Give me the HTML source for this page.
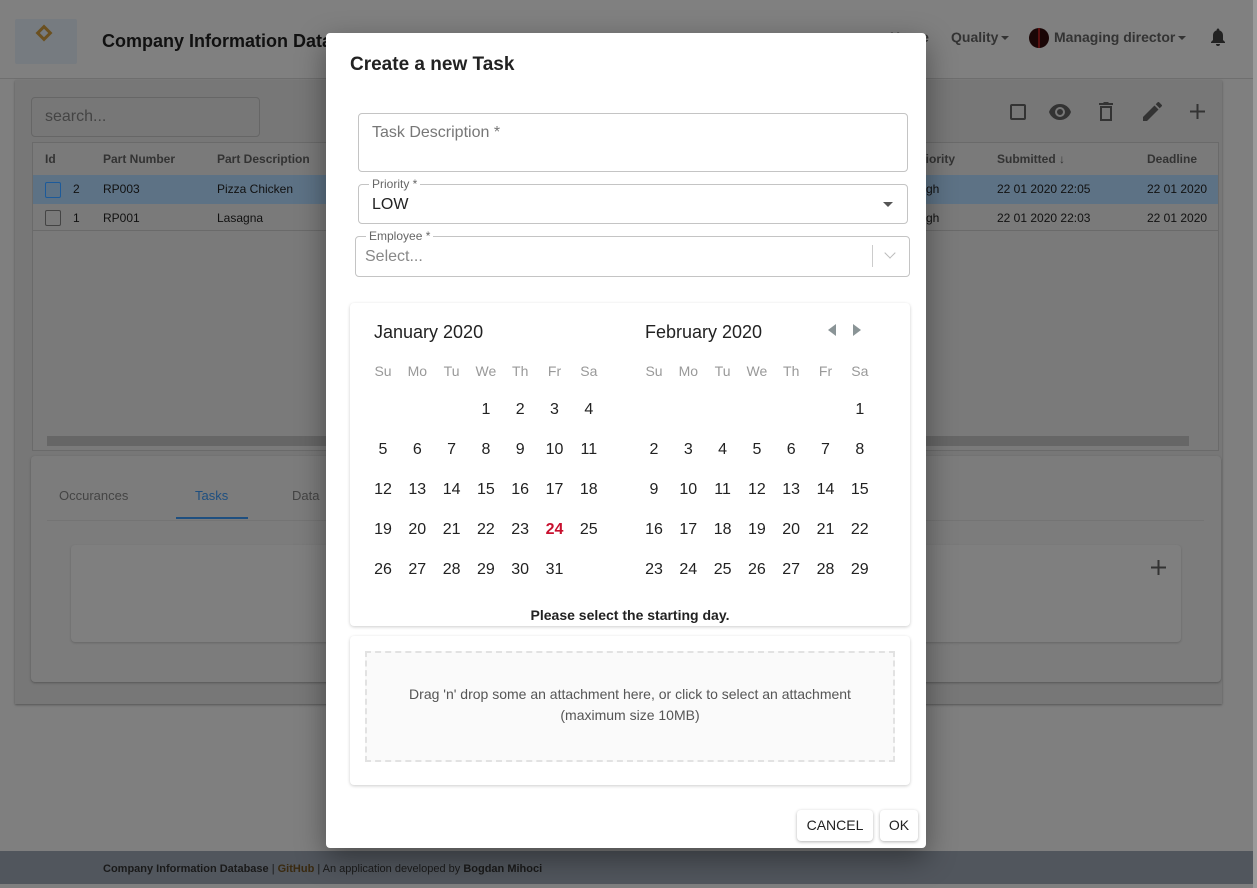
<!DOCTYPE html>
<html><head><meta charset="utf-8"><style>
*{box-sizing:border-box;margin:0;padding:0}
body{width:1257px;height:888px;position:relative;overflow:hidden;background:#7f7f7f;font-family:"Liberation Sans",Arial,sans-serif;color:#222}
.abs{position:absolute}
.hdr{left:0;top:0;width:1253px;height:79px;background:#808080;border-bottom:1px solid #6f6f6f}
.main{left:15px;top:80px;width:1207px;height:624px;background:#777;box-shadow:0 1px 2px #555}
.sb{right:0;top:0;width:4px;height:888px;background:#9a9a9a}
.foot{left:0;top:851px;width:1253px;height:33px;background:#51565d;font-size:11px;color:#1a1a1a;padding:12px 0 0 103px}
.dlg{left:326px;top:33px;width:600px;height:815px;background:#fff;border-radius:4px;box-shadow:0 10px 30px rgba(0,0,0,.4)}
.fld{position:absolute;border:1px solid #c4c4c4;border-radius:4px}
.lbl{position:absolute;background:#fff;font-size:12px;color:#666;padding:0 3px}
.cal{left:24px;top:270px;width:560px;height:323px;border-radius:4px;box-shadow:0 1px 3px rgba(0,0,0,.2)}
.d{position:absolute;width:30px;margin-left:-15px;text-align:center;font-size:16px;color:#222}
.w{position:absolute;width:30px;margin-left:-15px;text-align:center;font-size:14px;color:#999}
.btn{position:absolute;top:777px;height:31px;background:#fff;border-radius:4px;box-shadow:0 1px 3px rgba(0,0,0,.3);font-size:14px;color:#222;text-align:center;line-height:31px}
.car{display:inline-block;border:4px solid transparent;border-top:4px solid #333;border-bottom:0;vertical-align:middle;margin-left:3px}
</style></head><body>
<div class="abs hdr"></div>
<div class="abs" style="left:15px;top:19px;width:62px;height:45px;background:#767b80;border-radius:2px"></div>
<div class="abs" style="left:38px;top:27px;width:12px;height:12px;border:3px solid #6b5020;transform:rotate(45deg)"></div>
<div class="abs" style="left:102px;top:31px;font-size:18px;font-weight:bold;color:#111">Company Information Database</div>
<div class="abs" style="left:890px;top:29px;font-size:14px;font-weight:bold;color:#333">Home</div>
<div class="abs" style="left:951px;top:29px;font-size:14px;font-weight:bold;color:#333">Quality<span class="car"></span></div>
<div class="abs" style="left:1029px;top:28px;width:20px;height:20px;border-radius:50%;background:#1a0606"></div>
<div class="abs" style="left:1038px;top:28px;width:2px;height:20px;background:#5a1010"></div>
<div class="abs" style="left:1054px;top:29px;font-size:14px;font-weight:bold;color:#333">Managing director<span class="car"></span></div>
<svg class="abs" style="left:1210px;top:28px" width="16" height="18" viewBox="0 0 16 18"><path d="M8 0.5c-0.8 0-1.3 0.6-1.3 1.3v0.6C4.3 3 3 5 3 7.5V12l-2 2v1h14v-1l-2-2V7.5C13 5 11.7 3 9.3 2.4v-0.6C9.3 1.1 8.8 0.5 8 0.5zM6 16a2 2 0 0 0 4 0z" fill="#222"/></svg>
<div class="abs main"></div>
<div class="abs" style="left:31px;top:97px;width:229px;height:40px;border:1px solid #666;border-radius:4px;font-size:16px;color:#444;padding:10px 13px">search...</div>
<div class="abs" style="left:1010px;top:104px;width:16px;height:16px;border:2px solid #333;border-radius:2px"></div>
<svg class="abs" style="left:1048px;top:103px" width="24" height="18" viewBox="0 0 24 18"><path d="M12 1C7 1 2.7 4.1 1 9c1.7 4.9 6 8 11 8s9.3-3.1 11-8c-1.7-4.9-6-8-11-8zm0 13a5 5 0 1 1 0-10 5 5 0 0 1 0 10zm0-8a3 3 0 1 0 0 6 3 3 0 0 0 0-6z" fill="#333"/></svg>
<svg class="abs" style="left:1099px;top:102px" width="14" height="19" viewBox="0 0 14 19"><path d="M0 1h4l1-1h4l1 1h4v2H0zM1 4h12v15H1zM3 6v11h8V6z" fill="#333"/></svg>
<svg class="abs" style="left:1143px;top:102px" width="19" height="19" viewBox="0 0 19 19"><path d="M0 15v4h4L15.5 7.5l-4-4zM18.7 4.3a1 1 0 0 0 0-1.4L16.1.3a1 1 0 0 0-1.4 0l-2 2 4 4z" fill="#333"/></svg>
<svg class="abs" style="left:1190px;top:104px" width="15" height="15" viewBox="0 0 15 15"><path d="M6.5 0h2v6.5H15v2H8.5V15h-2V8.5H0v-2h6.5z" fill="#333"/></svg>
<div class="abs" style="left:32px;top:142px;width:1187px;height:309px;border:1px solid #6a6a6a;background:#7a7a7a"></div>
<div class="abs" style="left:33px;top:143px;width:1185px;height:32px;font-size:12px;font-weight:bold;color:#333">
<span class="abs" style="left:12px;top:9px">Id</span><span class="abs" style="left:70px;top:9px">Part Number</span><span class="abs" style="left:184px;top:9px">Part Description</span><span class="abs" style="left:880px;top:9px">Priority</span><span class="abs" style="left:964px;top:9px">Submitted ↓</span><span class="abs" style="left:1114px;top:9px">Deadline</span></div>
<div class="abs" style="left:33px;top:175px;width:1185px;height:29px;background:#5d7285"></div>
<div class="abs" style="left:33px;top:204px;width:1185px;height:27px;border-bottom:1px solid #6a6a6a"></div>
<div class="abs" style="left:45px;top:182px;width:16px;height:16px;border:1px solid #1c5a9a;border-radius:2px"></div>
<div class="abs" style="left:45px;top:210px;width:16px;height:16px;border:1px solid #444;border-radius:2px"></div>
<div class="abs" style="left:0;top:182px;font-size:12px;color:#111;width:1257px">
<span class="abs" style="left:73px">2</span><span class="abs" style="left:103px">RP003</span><span class="abs" style="left:217px">Pizza Chicken</span><span class="abs" style="left:926px">gh</span><span class="abs" style="left:997px">22 01 2020 22:05</span><span class="abs" style="left:1147px">22 01 2020</span></div>
<div class="abs" style="left:0;top:211px;font-size:12px;color:#111;width:1257px">
<span class="abs" style="left:73px">1</span><span class="abs" style="left:103px">RP001</span><span class="abs" style="left:217px">Lasagna</span><span class="abs" style="left:926px">gh</span><span class="abs" style="left:997px">22 01 2020 22:03</span><span class="abs" style="left:1147px">22 01 2020</span></div>
<div class="abs" style="left:47px;top:436px;width:1142px;height:10px;background:#666"></div>
<div class="abs" style="left:31px;top:456px;width:1190px;height:226px;background:#7c7c7c;border-radius:4px;box-shadow:0 1px 2px #555"></div>
<div class="abs" style="left:47px;top:520px;width:1157px;height:1px;background:#747474"></div>
<div class="abs" style="left:59px;top:488px;font-size:13px;color:#444">Occurances</div>
<div class="abs" style="left:195px;top:488px;font-size:13px;color:#1e4f80">Tasks</div>
<div class="abs" style="left:176px;top:517px;width:72px;height:2px;background:#1e4f80"></div>
<div class="abs" style="left:292px;top:488px;font-size:13px;color:#444">Data</div>
<div class="abs" style="left:71px;top:545px;width:1110px;height:97px;background:#7f7f7f;border-radius:4px;box-shadow:0 1px 2px #666"></div>
<svg class="abs" style="left:1151px;top:560px" width="15" height="15" viewBox="0 0 15 15"><path d="M6.5 0h2v6.5H15v2H8.5V15h-2V8.5H0v-2h6.5z" fill="#333"/></svg>
<div class="abs foot"><b>Company Information Database</b> | <b style="color:#3a2a10">GitHub</b> | An application developed by <b>Bogdan Mihoci</b></div>
<div class="abs sb"></div>

<div class="abs dlg">
<div class="abs" style="left:24px;top:21px;font-size:19px;font-weight:bold;color:#222">Create a new Task</div>
<div class="fld" style="left:32px;top:80px;width:550px;height:59px"></div>
<div class="abs" style="left:46px;top:91px;font-size:16px;color:#777">Task Description *</div>
<div class="fld" style="left:32px;top:151px;width:550px;height:40px"></div>
<div class="lbl" style="left:43px;top:144px">Priority *</div>
<div class="abs" style="left:46px;top:163px;font-size:16px;color:#222">LOW</div>
<div class="abs" style="left:557px;top:169px;border:5px solid transparent;border-top-color:#555"></div>
<div class="fld" style="left:29px;top:203px;width:555px;height:41px"></div>
<div class="lbl" style="left:40px;top:196px">Employee *</div>
<div class="abs" style="left:39px;top:215px;font-size:16px;color:#888">Select...</div>
<div class="abs" style="left:546px;top:212px;width:1px;height:22px;background:#ccc"></div>
<div class="abs" style="left:560px;top:216px;width:8px;height:8px;border-right:1.5px solid #bbb;border-bottom:1.5px solid #bbb;transform:rotate(45deg)"></div>
<div class="abs cal">
<div class="abs" style="left:24px;top:19px;font-size:18px;color:#222">January 2020</div>
<div class="abs" style="left:295px;top:19px;font-size:18px;color:#222">February 2020</div>
<div class="abs" style="left:478px;top:21px;border:6px solid transparent;border-right:8px solid #8a9496;border-left:0"></div>
<div class="abs" style="left:503px;top:21px;border:6px solid transparent;border-left:8px solid #8a9496;border-right:0"></div>
<div class="abs" style="left:0;top:304px;width:560px;text-align:center;font-size:14px;font-weight:bold;color:#222">Please select the starting day.</div>
<div id="c"></div>
</div>
<div class="abs" style="left:24px;top:603px;width:560px;height:149px;border-radius:4px;box-shadow:0 1px 3px rgba(0,0,0,.2)"></div>
<div class="abs" style="left:39px;top:618px;width:530px;height:111px;border:2px dashed #e2e2e2;background:#fafafa;text-align:center;font-size:14px;color:#555;line-height:21px;padding-top:31px">Drag 'n' drop some an attachment here, or click to select an attachment<br>(maximum size 10MB)</div>
<div class="btn" style="left:471px;width:76px">CANCEL</div>
<div class="btn" style="left:554px;width:38px">OK</div>
</div>
<script>
var c=document.getElementById('c'),h='';
var wd=['Su','Mo','Tu','We','Th','Fr','Sa'];
function m(x0,start,n){for(var i=0;i<7;i++)h+='<div class="w" style="left:'+(x0+i*34.3-350)+'px;top:60px">'+wd[i]+'</div>';
for(var d=1;d<=n;d++){var p=start+d-1,col=p%7,row=Math.floor(p/7);var s=d==24&&start==3?'color:#c8102e;font-weight:bold;':'';
h+='<div class="d" style="'+s+'left:'+(x0+col*34.3-350)+'px;top:'+(98+row*40)+'px">'+d+'</div>';}}
m(383,3,31);m(654,6,29);c.innerHTML=h;
</script>
</body></html>
